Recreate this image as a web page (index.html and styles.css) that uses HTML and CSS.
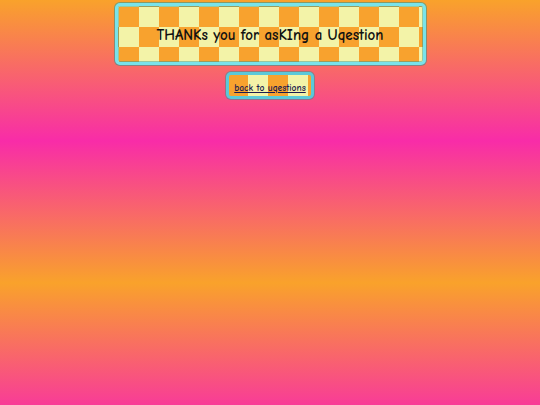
FILE: index.html
```
<!DOCTYPE html>
<html>
<head>
<meta charset="utf-8">
<link rel="stylesheet" href="styles.css">
</head>
<body>
<div class="page">
  <div class="banner">THANKs you for asKIng a Uqestion</div>
  <a class="back" href="#">back to uqestions</a>
</div>
</body>
</html>
```
FILE: styles.css
```
html, body {
  margin: 0;
  height: 100%;
}
body {
  background: repeating-linear-gradient(180deg, #f9a22b 0px, #f82ca8 141px, #f9a22b 283px);
  font-family: "Comic Sans MS", "Comic Neue", "DejaVu Sans", sans-serif;
}
.page {
  display: flex;
  flex-direction: column;
  align-items: center;
  padding-top: 3px;
}
.banner {
  box-sizing: border-box;
  width: 311px;
  height: 62px;
  border: 3px solid #78e3ea;
  border-radius: 5px;
  box-shadow: 0 0 0 1px rgba(40, 150, 150, 0.55), inset 0 0 0 1px rgba(40, 150, 150, 0.45);
  background-color: #f8a22e;
  background-image: conic-gradient(#f3f3a8 0 25%, #f8a22e 0 50%, #f3f3a8 0 75%, #f8a22e 0);
  background-size: 40px 40px;
  background-position: 1px 1px;
  display: flex;
  align-items: center;
  justify-content: center;
  font-size: 15px;
  font-weight: 700;
  color: #111;
  padding-top: 1px;
}
.back {
  margin-top: 7px;
  box-sizing: border-box;
  width: 88px;
  height: 27px;
  border: 3px solid #5bc9d9;
  border-radius: 5px;
  box-shadow: 0 0 0 1px rgba(40, 150, 150, 0.5);
  background-color: #f8a22e;
  background-image: linear-gradient(90deg, #f8a22e 0 20px, #f3f3a8 20px 40px);
  background-size: 40px 100%;
  background-position: -1px 0;
  display: flex;
  align-items: flex-end;
  justify-content: center;
  padding-bottom: 3px;
  font-size: 9.5px;
  font-weight: 700;
  color: #1c1c50;
  text-decoration: underline;
}
```
